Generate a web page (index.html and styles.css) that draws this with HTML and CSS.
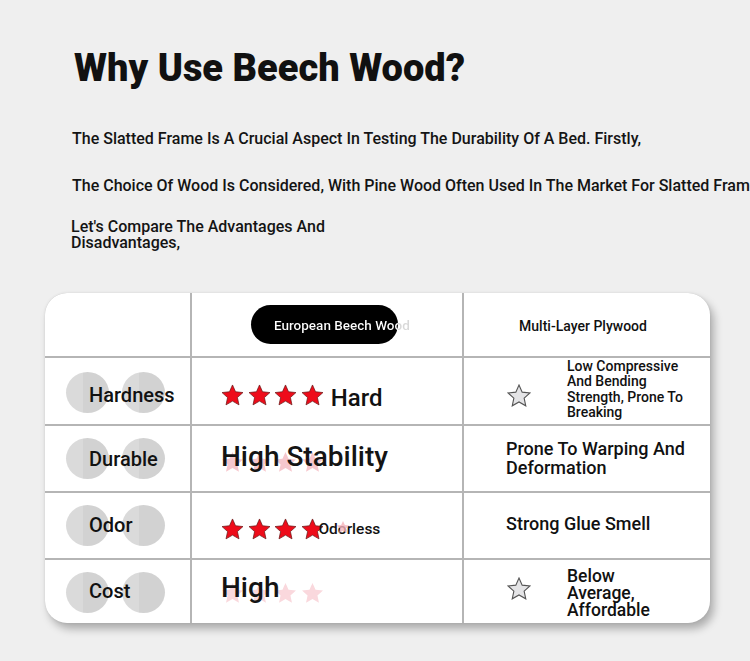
FILE: index.html
```html
<!DOCTYPE html>
<html lang="en">
<head>
<meta charset="utf-8">
<title>Why Use Beech Wood?</title>
<link rel="stylesheet" href="styles.css">
</head>
<body>
<svg width="0" height="0" class="defs" aria-hidden="true">
  <defs>
    <symbol id="star" viewBox="0 0 24 23">
      <path d="M12 1L15.18 8.13 22.94 8.95 17.14 14.17 18.76 21.8 12 17.9 5.24 21.8 6.86 14.17 1.06 8.95 8.82 8.13Z"/>
    </symbol>
  </defs>
</svg>
<div class="page">
  <h1 class="title">Why Use Beech Wood?</h1>
  <p class="line l1">The Slatted Frame Is A Crucial Aspect In Testing The Durability Of A Bed. Firstly,</p>
  <p class="line l2">The Choice Of Wood Is Considered, With Pine Wood Often Used In The Market For Slatted Frames.</p>
  <p class="line l3">Let's Compare The Advantages And<br>Disadvantages,</p>

  <div class="card">
    <div class="grid">
      <div class="cell"></div>
      <div class="cell hd2"><div class="pill"><span>European Beech Wood</span></div></div>
      <div class="cell hd3">Multi-Layer Plywood</div>

      <div class="cell lab r1"><div class="blobs"><i></i><i></i></div><div class="name">Hardness</div></div>
      <div class="cell c2 c2r1">
        <svg class="star red"><use href="#star"/></svg>
        <svg class="star red"><use href="#star"/></svg>
        <svg class="star red"><use href="#star"/></svg>
        <svg class="star red"><use href="#star"/></svg>
        <span class="hard">Hard</span>
      </div>
      <div class="cell c3 c3r1">
        <svg class="star grey"><use href="#star"/></svg>
        <div class="small">Low Compressive<br>And Bending<br>Strength, Prone To<br>Breaking</div>
      </div>

      <div class="cell lab r2"><div class="blobs"><i></i><i></i></div><div class="name">Durable</div></div>
      <div class="cell c2 stack r2s">
        <div class="pales">
          <svg class="star pale"><use href="#star"/></svg>
          <svg class="star pale"><use href="#star"/></svg>
          <svg class="star pale"><use href="#star"/></svg>
          <svg class="star pale"><use href="#star"/></svg>
        </div>
        <div class="big">High Stability</div>
      </div>
      <div class="cell c3 c3r2"><div class="mid">Prone To Warping And<br>Deformation</div></div>

      <div class="cell lab r3"><div class="blobs"><i></i><i></i></div><div class="name">Odor</div></div>
      <div class="cell c2 c2r3">
        <svg class="star red"><use href="#star"/></svg>
        <svg class="star red"><use href="#star"/></svg>
        <svg class="star red"><use href="#star"/></svg>
        <svg class="star red"><use href="#star"/></svg>
        <svg class="star faint"><use href="#star"/></svg>
        <span class="odorless">Odorless</span>
      </div>
      <div class="cell c3 c3r3"><div class="mid">Strong Glue Smell</div></div>

      <div class="cell lab r4"><div class="blobs"><i></i><i></i></div><div class="name">Cost</div></div>
      <div class="cell c2 stack r4s">
        <div class="pales">
          <svg class="star pale"><use href="#star"/></svg>
          <svg class="star pale"><use href="#star"/></svg>
          <svg class="star pale"><use href="#star"/></svg>
          <svg class="star pale"><use href="#star"/></svg>
        </div>
        <div class="big">High</div>
      </div>
      <div class="cell c3 c3r4">
        <svg class="star grey"><use href="#star"/></svg>
        <div class="low">Below<br>Average,<br>Affordable</div>
      </div>
    </div>
  </div>
</div>
</body>
</html>
```

FILE: styles.css
```css
* { box-sizing: border-box; }

html, body {
  margin: 0;
  padding: 0;
  background: #efefef;
}

body {
  font-family: Roboto, "Noto Sans", "Liberation Sans", sans-serif;
  color: #111;
  overflow: hidden;
}

.defs { position: absolute; width: 0; height: 0; }

.page {
  width: 750px;
  height: 661px;
  overflow: hidden;
  padding-top: 1px;
}

.title {
  margin: 45px 0 0 74px;
  font-size: 38px;
  line-height: 45px;
  font-weight: 900;
  color: #111;
}

.line {
  margin: 0 0 0 72px;
  font-size: 16px;
  line-height: 20px;
  font-weight: 500;
  white-space: nowrap;
  color: #141414;
}

.l1 { margin-top: 38px; }
.l2 { margin-top: 26.5px; }
.l3 { margin-top: 23.5px; margin-left: 71px; line-height: 15.5px; }

.card {
  margin: 43px 0 0 45px;
  width: 665px;
  border-radius: 22px;
  background: #b5b5b5;
  overflow: hidden;
  box-shadow: 0 0 3px rgba(0, 0, 0, 0.08), 4px 6px 9px rgba(0, 0, 0, 0.28);
}

.grid {
  display: grid;
  grid-template-columns: 145px 270px 246px;
  grid-template-rows: 63px 66px 65px 65px 63px;
  gap: 2px;
}

.cell { background: #fff; }

/* header */
.hd2 {
  display: flex;
  align-items: center;
  padding-left: 59px;
}

.pill {
  width: 147px;
  height: 39px;
  border-radius: 20px;
  background: #000;
  display: flex;
  align-items: center;
  padding-left: 23px;
  white-space: nowrap;
}

.pill span {
  font-size: 13.5px;
  font-weight: 500;
  background: linear-gradient(90deg, #fff 0 124px, #d8d8d8 124px);
  -webkit-background-clip: text;
  background-clip: text;
  color: transparent;
}

.hd3 {
  display: flex;
  align-items: center;
  justify-content: center;
  padding: 3px 8px 0 0;
  font-size: 14px;
  font-weight: 500;
  color: #111;
}

/* label column */
.lab { display: grid; }

.blobs, .name { grid-area: 1 / 1; align-self: start; }

.blobs {
  display: flex;
  gap: 13px;
  margin: 12px 0 0 21px;
}

.blobs i {
  width: 43px;
  height: 41px;
  border-radius: 50%;
  background: linear-gradient(90deg, #dadada 0 40%, #d2d2d2 40%);
}

.name {
  margin: 20px 0 0 44px;
  font-size: 20px;
  line-height: 24px;
  font-weight: 500;
  color: #111;
}

.r1 .blobs { margin-top: 14px; }
.r1 .name { margin-top: 25px; }
.r2 .name { margin-top: 21px; }
.r3 .name { margin-top: 20px; }
.r4 .name { margin-top: 18.5px; }

/* stars */
.star { width: 23px; height: 22px; flex: none; }
.red { fill: #ee0c1a; stroke: #6e1c1c; stroke-width: 0.8; stroke-linejoin: round; }
.grey { width: 24px; height: 23px; fill: #e4e4e6; stroke: #555; stroke-width: 1.1; }
.pale { fill: #f09aa6; opacity: 0.55; }
.faint { width: 14px; height: 16px; fill: #f6b3bb; opacity: 0.8; margin: 1px 0 0 8px; }

/* column 2 */
.c2 { padding-left: 29px; }

.c2r1, .c2r3 {
  display: flex;
  align-items: flex-start;
  gap: 3.7px;
}

.c2r1 .star { margin-top: 26px; }

.hard {
  margin: 27.5px 0 0 3px;
  font-size: 24px;
  line-height: 24px;
  font-weight: 500;
}

.c2r3 .red { margin-top: 24.7px; }
.c2r3 .faint { margin-top: 26px; }

.odorless {
  margin: 27px 0 0 -35px;
  font-size: 15.5px;
  line-height: 18px;
  font-weight: 500;
  color: #111;
}

.stack { display: grid; }
.pales, .big { grid-area: 1 / 1; align-self: start; }

.pales {
  display: flex;
  gap: 3.7px;
  margin-top: 25px;
}

.r4s .pales { margin-top: 22px; opacity: 0.7; }

.big {
  position: relative;
  margin-top: 14.5px;
  font-size: 28px;
  line-height: 32px;
  font-weight: 500;
  color: #141414;
}

.r4s .big { margin-top: 11.5px; }

/* column 3 */
.c3 {
  display: flex;
  align-items: flex-start;
  padding-left: 43px;
}

.c3r1 .grey { margin-top: 26px; }

.small {
  margin: 0.7px 0 0 36px;
  font-size: 14px;
  line-height: 15.4px;
  font-weight: 500;
  white-space: nowrap;
}

.c3r2, .c3r3 { padding-left: 42px; }

.mid {
  font-size: 18px;
  line-height: 19px;
  font-weight: 500;
  white-space: nowrap;
}

.c3r2 .mid { margin-top: 13.3px; }
.c3r3 .mid { margin-top: 20.6px; }

.c3r4 .grey { margin-top: 17px; }

.low {
  margin: 8px 0 0 36px;
  font-size: 17.5px;
  line-height: 17px;
  font-weight: 500;
  white-space: nowrap;
}
```
